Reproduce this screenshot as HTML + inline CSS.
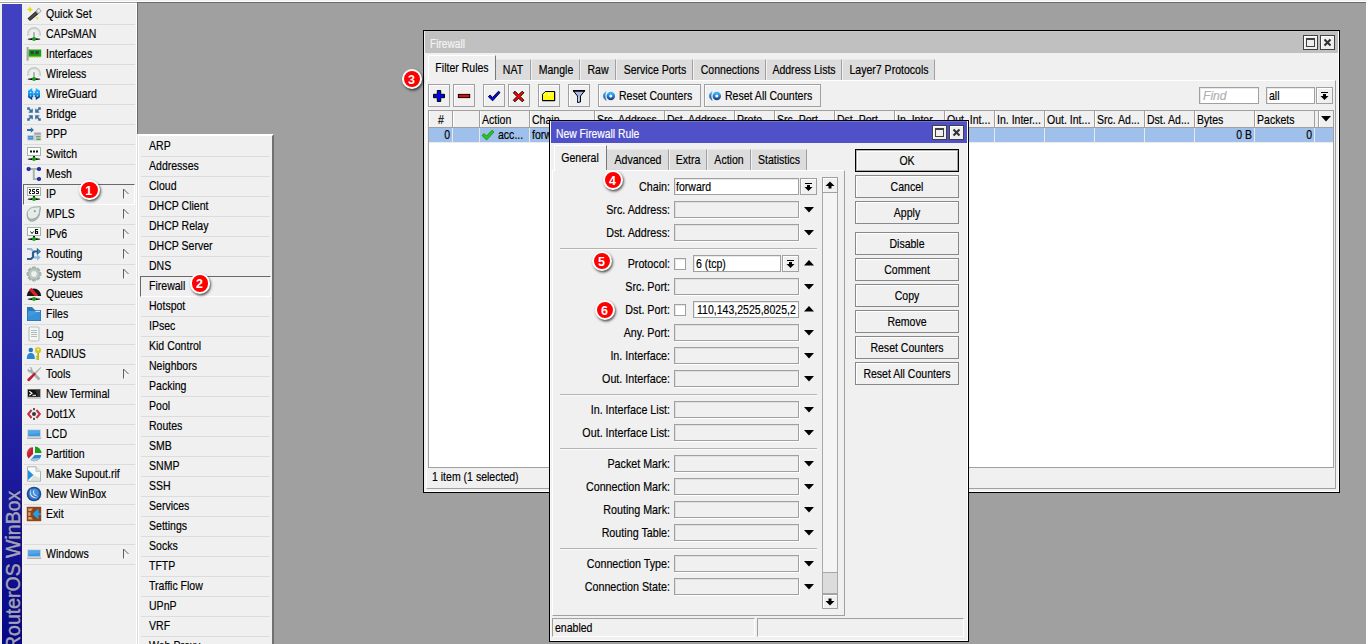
<!DOCTYPE html>
<html><head><meta charset="utf-8"><title>WinBox</title>
<style>
html,body{margin:0;padding:0;}
body{width:1366px;height:644px;overflow:hidden;background:#a0a0a0;position:relative;
 font-family:"Liberation Sans",sans-serif;font-size:13px;letter-spacing:0;color:#000;}
.b{position:absolute;box-sizing:border-box;}
.t{position:absolute;white-space:nowrap;line-height:15px;height:15px;transform:scaleX(.81);transform-origin:0 50%;-webkit-text-stroke:0.18px currentColor;}
.t.r{text-align:right;transform-origin:100% 50%;}
.t.c{text-align:center;transform-origin:50% 50%;}
.t.w{transform:scaleX(.825);}
.t.ww{transform:scaleX(.86);}
svg{position:absolute;overflow:visible;}
.sep{position:absolute;height:1px;background:#dcdcdc;}
.mi{position:absolute;left:46px;line-height:20px;height:20px;white-space:nowrap;}
.smi{position:absolute;left:149px;line-height:20px;height:20px;white-space:nowrap;}
.inp{position:absolute;box-sizing:border-box;border:1px solid #a0a0a0;background:#fff;box-shadow:inset 1px 1px 0 #e8e8e8;}
.inp.d{background:#f0f0f0;box-shadow:inset 1px 1px 0 #e0e0e0, 1px 1px 0 #fff;}
.btn{position:absolute;box-sizing:border-box;border:1px solid #888;background:#f0f0f0;box-shadow:inset 1px 1px 0 #fff;text-align:center;white-space:nowrap;}
.tab{position:absolute;box-sizing:border-box;background:#dcdcdc;border-right:1px solid #a0a0a0;border-top:1px solid #e6e6e6;white-space:nowrap;}
.tab.a{background:#f0f0f0;border-top:1px solid #fff;border-left:1px solid #fff;border-right:1px solid #787878;}
.tb{position:absolute;box-sizing:border-box;border:1px solid #a0a0a0;background:#f0f0f0;box-shadow:inset 1px 1px 0 #fff;}
.wb{position:absolute;box-sizing:border-box;width:15px;height:15px;border:1px solid #404040;background:#f0eeee;box-shadow:inset 1px 1px 0 #fff;}
.hs{position:absolute;width:1px;background:#a0a0a0;}
.badge{position:absolute;width:16.6px;height:16.6px;border-radius:50%;background:#ff0000;border:2.4px solid #fff;box-shadow:1px 1.5px 2.5px rgba(0,0,0,.65);color:#fff;font-weight:bold;font-size:12.5px;line-height:18.4px;text-align:center;letter-spacing:0;text-indent:-1.2px;overflow:hidden;}
</style></head>
<body>
<div class="b " style="left:0px;top:0px;width:1366px;height:1px;background:#f0f0f0"></div>
<div class="b " style="left:0px;top:1px;width:1366px;height:1px;background:#fff"></div>
<div class="b " style="left:0px;top:2px;width:137px;height:1px;background:#a0a0a0"></div>
<div class="b " style="left:137px;top:2px;width:1229px;height:1px;background:#696969"></div>
<div class="b " style="left:0px;top:3px;width:136px;height:641px;background:#f0f0f0"></div>
<div class="b " style="left:0px;top:3px;width:136px;height:1px;background:#fff"></div>
<div class="b " style="left:136px;top:3px;width:1px;height:641px;background:#fff"></div>
<div class="b " style="left:137px;top:3px;width:1px;height:641px;background:#696969"></div>
<div class="b " style="left:2px;top:4px;width:20px;height:640px;background:linear-gradient(#4040c0 0px,#4040c0 150px,#070787 640px)"></div>
<div style="position:absolute;left:2px;top:4px;width:20px;height:640px;overflow:hidden"><div id="vt" style="position:absolute;left:0;top:0;white-space:nowrap;font-size:19.5px;letter-spacing:0;color:#a2a2be;-webkit-text-stroke:0.45px #a2a2be;line-height:20px;transform-origin:0 0;transform:translate(0.5px,646px) rotate(-90deg);text-shadow:1px 1px 1px rgba(0,0,40,.5)">RouterOS WinBox</div></div>
<div class="t " style="left:46px;top:6px;">Quick Set</div>
<div class="sep" style="left:24px;top:24px;width:111px"></div>
<div class="t " style="left:46px;top:26px;">CAPsMAN</div>
<div class="sep" style="left:24px;top:44px;width:111px"></div>
<div class="t " style="left:46px;top:46px;">Interfaces</div>
<div class="sep" style="left:24px;top:64px;width:111px"></div>
<div class="t " style="left:46px;top:66px;">Wireless</div>
<div class="sep" style="left:24px;top:84px;width:111px"></div>
<div class="t " style="left:46px;top:86px;">WireGuard</div>
<div class="sep" style="left:24px;top:104px;width:111px"></div>
<div class="t " style="left:46px;top:106px;">Bridge</div>
<div class="sep" style="left:24px;top:124px;width:111px"></div>
<div class="t " style="left:46px;top:126px;">PPP</div>
<div class="sep" style="left:24px;top:144px;width:111px"></div>
<div class="t " style="left:46px;top:146px;">Switch</div>
<div class="sep" style="left:24px;top:164px;width:111px"></div>
<div class="t " style="left:46px;top:166px;">Mesh</div>
<div class="b " style="left:23px;top:184px;width:112px;height:21px;border-top:1px solid #696969;border-left:1px solid #696969;border-bottom:1px solid #fff;border-right:1px solid #fff;"></div>
<div class="t " style="left:46px;top:186px;">IP</div>
<svg style="left:122px;top:188px" width="8" height="12" viewBox="0 0 8 12"><path d="M1.5 1 L1.5 11" stroke="#606060" stroke-width="1" fill="none"/><path d="M1.5 1 L6.5 6" stroke="#606060" stroke-width="1" fill="none"/><path d="M6.5 6 L1.5 11" stroke="#fff" stroke-width="1" fill="none"/></svg>
<div class="t " style="left:46px;top:206px;">MPLS</div>
<svg style="left:122px;top:208px" width="8" height="12" viewBox="0 0 8 12"><path d="M1.5 1 L1.5 11" stroke="#606060" stroke-width="1" fill="none"/><path d="M1.5 1 L6.5 6" stroke="#606060" stroke-width="1" fill="none"/><path d="M6.5 6 L1.5 11" stroke="#fff" stroke-width="1" fill="none"/></svg>
<div class="sep" style="left:24px;top:224px;width:111px"></div>
<div class="t " style="left:46px;top:226px;">IPv6</div>
<svg style="left:122px;top:228px" width="8" height="12" viewBox="0 0 8 12"><path d="M1.5 1 L1.5 11" stroke="#606060" stroke-width="1" fill="none"/><path d="M1.5 1 L6.5 6" stroke="#606060" stroke-width="1" fill="none"/><path d="M6.5 6 L1.5 11" stroke="#fff" stroke-width="1" fill="none"/></svg>
<div class="sep" style="left:24px;top:244px;width:111px"></div>
<div class="t " style="left:46px;top:246px;">Routing</div>
<svg style="left:122px;top:248px" width="8" height="12" viewBox="0 0 8 12"><path d="M1.5 1 L1.5 11" stroke="#606060" stroke-width="1" fill="none"/><path d="M1.5 1 L6.5 6" stroke="#606060" stroke-width="1" fill="none"/><path d="M6.5 6 L1.5 11" stroke="#fff" stroke-width="1" fill="none"/></svg>
<div class="sep" style="left:24px;top:264px;width:111px"></div>
<div class="t " style="left:46px;top:266px;">System</div>
<svg style="left:122px;top:268px" width="8" height="12" viewBox="0 0 8 12"><path d="M1.5 1 L1.5 11" stroke="#606060" stroke-width="1" fill="none"/><path d="M1.5 1 L6.5 6" stroke="#606060" stroke-width="1" fill="none"/><path d="M6.5 6 L1.5 11" stroke="#fff" stroke-width="1" fill="none"/></svg>
<div class="sep" style="left:24px;top:284px;width:111px"></div>
<div class="t " style="left:46px;top:286px;">Queues</div>
<div class="sep" style="left:24px;top:304px;width:111px"></div>
<div class="t " style="left:46px;top:306px;">Files</div>
<div class="sep" style="left:24px;top:324px;width:111px"></div>
<div class="t " style="left:46px;top:326px;">Log</div>
<div class="sep" style="left:24px;top:344px;width:111px"></div>
<div class="t " style="left:46px;top:346px;">RADIUS</div>
<div class="sep" style="left:24px;top:364px;width:111px"></div>
<div class="t " style="left:46px;top:366px;">Tools</div>
<svg style="left:122px;top:368px" width="8" height="12" viewBox="0 0 8 12"><path d="M1.5 1 L1.5 11" stroke="#606060" stroke-width="1" fill="none"/><path d="M1.5 1 L6.5 6" stroke="#606060" stroke-width="1" fill="none"/><path d="M6.5 6 L1.5 11" stroke="#fff" stroke-width="1" fill="none"/></svg>
<div class="sep" style="left:24px;top:384px;width:111px"></div>
<div class="t " style="left:46px;top:386px;">New Terminal</div>
<div class="sep" style="left:24px;top:404px;width:111px"></div>
<div class="t " style="left:46px;top:406px;">Dot1X</div>
<div class="sep" style="left:24px;top:424px;width:111px"></div>
<div class="t " style="left:46px;top:426px;">LCD</div>
<div class="sep" style="left:24px;top:444px;width:111px"></div>
<div class="t " style="left:46px;top:446px;">Partition</div>
<div class="sep" style="left:24px;top:464px;width:111px"></div>
<div class="t " style="left:46px;top:466px;">Make Supout.rif</div>
<div class="sep" style="left:24px;top:484px;width:111px"></div>
<div class="t " style="left:46px;top:486px;">New WinBox</div>
<div class="sep" style="left:24px;top:504px;width:111px"></div>
<div class="t " style="left:46px;top:506px;">Exit</div>
<div class="sep" style="left:24px;top:524px;width:111px"></div>
<div class="sep" style="left:24px;top:544px;width:111px"></div>
<div class="t " style="left:46px;top:546px;">Windows</div>
<svg style="left:122px;top:548px" width="8" height="12" viewBox="0 0 8 12"><path d="M1.5 1 L1.5 11" stroke="#606060" stroke-width="1" fill="none"/><path d="M1.5 1 L6.5 6" stroke="#606060" stroke-width="1" fill="none"/><path d="M6.5 6 L1.5 11" stroke="#fff" stroke-width="1" fill="none"/></svg>
<div class="sep" style="left:24px;top:564px;width:111px"></div>
<svg style="left:26px;top:6px" width="16" height="16" viewBox="0 0 16 16"><path d="M1.500 12.500 L10.500 4.500 L13 7.500 L4 15z" fill="#282828"/><path d="M2.700 12.700 L10.500 5.800 L11.500 7 L3.800 13.900z" fill="#505050"/><path d="M9.800 5.200 L12.600 2 L15.200 5 L12.200 8z" fill="#d0d0d0" stroke="#909090" stroke-width="0.700"/><rect x="12" y="4" width="1.500" height="1.500" fill="#fff"/><path d="M4 0.500 L5 2.500 L7 3.500 L5 4.500 L4 6.500 L3 4.500 L1 3.500 L3 2.500z" fill="#e0e000"/><rect x="10.2" y="11.2" width="2" height="2" fill="#e0e020"/></svg>
<svg style="left:26px;top:26px" width="16" height="16" viewBox="0 0 16 16"><path d="M2.350 9.800 V8 A5.650 5.650 0 0 1 13.650 8 V9.800" fill="none" stroke="#c0c8c4" stroke-width="2.500"/><path d="M3 9.800 V8 A5 5 0 0 1 13 8 V9.800" fill="none" stroke="#e6eae8" stroke-width="1.200"/><rect x="7.250" y="6.200" width="1.500" height="5.800" fill="#94a49c"/><ellipse cx="8" cy="13.200" rx="6.400" ry="0.900" fill="#101010"/><rect x="5" y="12.600" width="6" height="1.200" fill="#101010"/><circle cx="8" cy="13" r="2" fill="#18a018"/></svg>
<svg style="left:26px;top:46px" width="16" height="16" viewBox="0 0 16 16"><rect x="0.600" y="1" width="2" height="13.600" fill="#9aa8a0"/><rect x="2.6" y="3.5" width="12.6" height="7.2" fill="#18a018"/><rect x="4.6" y="5" width="3.2" height="3.2" fill="#403848"/><rect x="9.4" y="5" width="3.2" height="3.2" fill="#403848"/><path d="M3 10.7h1.5v1H3zM5.5 10.7H7v1H5.5zM8 10.7h1.5v1H8zM10.5 10.7H12v1h-1.5zM13 10.7h1.5v1H13z" fill="#c8d820"/></svg>
<svg style="left:26px;top:66px" width="16" height="16" viewBox="0 0 16 16"><path d="M2.350 9.800 V8 A5.650 5.650 0 0 1 13.650 8 V9.800" fill="none" stroke="#c0c8c4" stroke-width="2.500"/><path d="M3 9.800 V8 A5 5 0 0 1 13 8 V9.800" fill="none" stroke="#e6eae8" stroke-width="1.200"/><rect x="7.250" y="6.200" width="1.500" height="5.800" fill="#94a49c"/><ellipse cx="8" cy="13.200" rx="6.400" ry="0.900" fill="#101010"/><rect x="5" y="12.600" width="6" height="1.200" fill="#101010"/><circle cx="8" cy="13" r="2" fill="#18a018"/></svg>
<svg style="left:26px;top:86px" width="16" height="16" viewBox="0 0 16 16"><defs><linearGradient id="wg" x1="0" y1="0" x2="0" y2="1"><stop offset="0" stop-color="#28b8ff"/><stop offset="0.500" stop-color="#189cf0"/><stop offset="1" stop-color="#001468"/></linearGradient></defs><path d="M6.200 1.900 L2 4.700 V11.300 L6.200 14.100 V11.200 H7.300 V4.800 H6.200z M9.800 1.900 L14 4.700 V11.300 L9.800 14.100 V11.200 H8.700 V4.800 H9.800z M7 7.100h2v1.900h-2z" fill="url(#wg)"/><rect x="4.100" y="6" width="1.100" height="1.100" fill="#f0f8ff"/><rect x="4.100" y="9.300" width="1.100" height="1.100" fill="#f0f8ff"/><rect x="10.800" y="6" width="1.100" height="1.100" fill="#f0f8ff"/><rect x="10.800" y="9.300" width="1.100" height="1.100" fill="#f0f8ff"/></svg>
<svg style="left:26px;top:106px" width="16" height="16" viewBox="0 0 16 16"><g fill="#3c6c9c"><path d="M1.200 1.200 H3.800 V2.400 H3.600 L5.500 4.300 V2.700 H6.800 V6.800 H2.700 V5.500 H4.300 L2.400 3.600 V3.800 H1.200z"/><g transform="translate(16 0) scale(-1 1)"><path d="M1.200 1.200 H3.800 V2.400 H3.600 L5.500 4.300 V2.700 H6.800 V6.800 H2.700 V5.500 H4.300 L2.400 3.600 V3.800 H1.200z"/></g><g transform="translate(0 16) scale(1 -1)"><path d="M1.200 1.200 H3.800 V2.400 H3.600 L5.500 4.300 V2.700 H6.800 V6.800 H2.700 V5.500 H4.300 L2.400 3.600 V3.800 H1.200z"/></g><g transform="translate(16 16) scale(-1 -1)"><path d="M1.200 1.200 H3.800 V2.400 H3.600 L5.500 4.300 V2.700 H6.800 V6.800 H2.700 V5.500 H4.300 L2.400 3.600 V3.800 H1.200z"/></g></g></svg>
<svg style="left:26px;top:126px" width="16" height="16" viewBox="0 0 16 16"><path d="M1 3h3.800V1.200L8 4 4.800 6.800V5H1z" fill="#3070a8"/><rect x="1.200" y="9" width="7" height="5.500" fill="#c0ccd4"/><rect x="2.200" y="10" width="5" height="3.500" fill="#3c8cd8"/><rect x="3" y="10.800" width="3.400" height="1.200" fill="#70b0e8"/><rect x="7.800" y="6" width="7.500" height="8.800" fill="#d0d0d0"/><rect x="8.500" y="6.800" width="6.200" height="2" fill="#a8a8a8"/><rect x="10" y="10.300" width="4.500" height="0.900" fill="#707070"/><rect x="10.500" y="12.600" width="4" height="1.200" fill="#18b018"/></svg>
<svg style="left:26px;top:146px" width="16" height="16" viewBox="0 0 16 16"><rect x="1.500" y="1.500" width="13" height="8" fill="#fff" stroke="#a0b4ac" stroke-width="1"/><rect x="4" y="4.500" width="2" height="2" fill="#101010"/><rect x="7" y="4.500" width="2" height="2" fill="#101010"/><rect x="10" y="4.500" width="2" height="2" fill="#101010"/><rect x="7" y="10" width="2" height="2" fill="#181818"/><ellipse cx="8" cy="13.200" rx="6.400" ry="0.900" fill="#101010"/><rect x="5" y="12.600" width="6" height="1.200" fill="#101010"/><circle cx="8" cy="13" r="2" fill="#18a018"/></svg>
<svg style="left:26px;top:166px" width="16" height="16" viewBox="0 0 16 16"><path d="M2.5 3 H13 M7.8 3 V13 H13" fill="none" stroke="#a8b4ac" stroke-width="2"/><circle cx="2.6" cy="3" r="2.1" fill="#1818a0"/><circle cx="13" cy="3" r="2.1" fill="#1818a0"/><circle cx="13" cy="13" r="2.1" fill="#1818a0"/><circle cx="2.6" cy="3" r="0.8" fill="#4848d0"/><circle cx="13" cy="3" r="0.8" fill="#4848d0"/><circle cx="13" cy="13" r="0.8" fill="#4848d0"/></svg>
<svg style="left:26px;top:186px" width="16" height="16" viewBox="0 0 16 16"><rect x="1.500" y="1.500" width="13" height="8" fill="#fff" stroke="#a0b4ac" stroke-width="1"/><path transform="translate(3 3)" d="M0.500 0.500 H1.500 V2.500 H0.500 V4.500 H1.500" fill="none" stroke="#101010" stroke-width="1" stroke-linecap="square" stroke-linejoin="miter"/><path transform="translate(6 3)" d="M2.500 0.500 H0.500 V2.500 H2.500 V4.500 H0.500" fill="none" stroke="#101010" stroke-width="1" stroke-linecap="square" stroke-linejoin="miter"/><path transform="translate(10 3)" d="M2.500 0.500 H0.500 V2.500 H2.500 V4.500 H0.500" fill="none" stroke="#101010" stroke-width="1" stroke-linecap="square" stroke-linejoin="miter"/><rect x="7" y="10" width="2" height="2" fill="#181818"/><ellipse cx="8" cy="13.200" rx="6.400" ry="0.900" fill="#101010"/><rect x="5" y="12.600" width="6" height="1.200" fill="#101010"/><circle cx="8" cy="13" r="2" fill="#18a018"/></svg>
<svg style="left:26px;top:206px" width="16" height="16" viewBox="0 0 16 16"><path d="M1.200 9.500 C1.200 5.500 4 2.800 8 2.300 L14.300 1.800 L13.500 8.500 C12.500 12.500 9 15.300 5.500 15.300 C2.800 15.300 1.200 12.500 1.200 9.500z" fill="#a8b8b0" stroke="#98a8a0" stroke-width="0.800"/><path d="M1.200 8 C1.200 4.300 4 1.600 8 1.100 L14.300 0.700 L13.500 6.500 C12.500 10.500 9 13.200 5.500 13.200 C2.800 13.200 1.200 11 1.200 8z" fill="#e6ecea" stroke="#98a8a0" stroke-width="1"/><circle cx="8.800" cy="5.200" r="1.100" fill="#98a49e"/></svg>
<svg style="left:26px;top:226px" width="16" height="16" viewBox="0 0 16 16"><rect x="1.500" y="1.500" width="13" height="8" fill="#fff" stroke="#a0b4ac" stroke-width="1"/><path d="M4.500 5.500 L6 7.500 L7.500 5.500" fill="none" stroke="#101010" stroke-width="1"/><path transform="translate(9 3)" d="M2.500 0.500 H0.500 V4.500 H2.500 V2.500 H0.500" fill="none" stroke="#101010" stroke-width="1.2" stroke-linecap="square" stroke-linejoin="miter"/><rect x="7" y="10" width="2" height="2" fill="#181818"/><ellipse cx="8" cy="13.200" rx="6.400" ry="0.900" fill="#101010"/><rect x="5" y="12.600" width="6" height="1.200" fill="#101010"/><circle cx="8" cy="13" r="2" fill="#18a018"/></svg>
<svg style="left:26px;top:246px" width="16" height="16" viewBox="0 0 16 16"><path d="M1 3 H5 L7.500 5.500" fill="none" stroke="#90b8e0" stroke-width="2"/><path d="M8 11.500 H11.500" fill="none" stroke="#90b8e0" stroke-width="2.200"/><path d="M11 8.300 L14.700 11.500 L11 14.700z" fill="#90b8e0"/><path d="M1 13 H5 L7 11 V6.800 L8.500 5.500 H11.500" fill="none" stroke="#2c5c90" stroke-width="2.200"/><path d="M10.800 1.800 L15 5.500 L10.800 9.200z" fill="#2c5c90"/><rect x="12" y="4.500" width="1.200" height="2" fill="#20b0f8"/></svg>
<svg style="left:26px;top:266px" width="16" height="16" viewBox="0 0 16 16"><g fill="#a6b6ae"><circle cx="8" cy="8" r="5.900"/><rect x="5.900" y="0.600" width="4.200" height="14.800" rx="0.800"/><rect x="0.600" y="5.900" width="14.800" height="4.200" rx="0.800"/><rect x="5.900" y="0.600" width="4.200" height="14.800" rx="0.800" transform="rotate(45 8 8)"/><rect x="5.900" y="0.600" width="4.200" height="14.800" rx="0.800" transform="rotate(-45 8 8)"/></g><circle cx="8" cy="8" r="4.500" fill="#d8e0dc"/><circle cx="8" cy="8" r="3.700" fill="#a6b6ae"/><circle cx="8" cy="8" r="2.900" fill="#f0f0f0"/></svg>
<svg style="left:26px;top:286px" width="16" height="16" viewBox="0 0 16 16"><path d="M0.800 10 A7.200 7.500 0 0 1 15.200 10 z" fill="#181818"/><path d="M2.800 4 L5.400 1.800 L12 9 L11.500 10 L8.800 10z" fill="#e02030"/><ellipse cx="8" cy="13.200" rx="6.400" ry="0.900" fill="#101010"/><rect x="5" y="12.600" width="6" height="1.200" fill="#101010"/><circle cx="8" cy="13" r="2.100" fill="#18a018"/></svg>
<svg style="left:26px;top:306px" width="16" height="16" viewBox="0 0 16 16"><path d="M1 1 H6 L9 4 H15 V15 H1z" fill="#2878b8"/><path d="M2 5 H14.200 V14.200 H2z" fill="#3890d8"/><path d="M2 5h12.200L2 11z" fill="#48a0e0" opacity=".7"/><rect x="9.500" y="4.800" width="4.500" height="1" fill="#e8f0f8"/></svg>
<svg style="left:26px;top:326px" width="16" height="16" viewBox="0 0 16 16"><path d="M3 1.500 h1l1 -1 1 1 1 -1 1 1 1 -1 1 1 1 -1 1 1h1 V14.500 h-1l-1 1 -1 -1 -1 1 -1 -1 -1 1 -1 -1 -1 1 -1 -1h-1z" fill="#f4f6f5" stroke="#b0bcb6" stroke-width="1"/><path d="M5 4.500h6M5 6.500h6M5 8.500h6M5 10.500h6" stroke="#b0bcb6" stroke-width="1"/></svg>
<svg style="left:26px;top:346px" width="16" height="16" viewBox="0 0 16 16"><circle cx="4.800" cy="4" r="2.300" fill="#2878c0"/><path d="M0.800 13 C0.800 8.500 2.500 7 4.800 7 C7.200 7 8.800 8.500 8.800 13z" fill="#2888d8"/><circle cx="12" cy="4.300" r="3" fill="#d0c818"/><circle cx="12" cy="3.600" r="1.100" fill="#f4f0b0"/><path d="M11.200 7 h1.800 v7 h-1.800z M9.800 10 h1.600v1.300H9.800z M9.800 12.300h1.600v1.300H9.800z" fill="#c0b810"/></svg>
<svg style="left:26px;top:366px" width="16" height="16" viewBox="0 0 16 16"><path d="M2 2.500 C1 4.500 2 6.500 4.500 6.500 L12.500 14.500 L14.500 12.500 L6.500 4.500 C6.800 2.500 5.500 0.800 3.500 1 L5 3 L4 4.500 L2 2.500z" fill="#a4b0aa"/><path d="M14.500 1 L15.300 1.800 L10 8 L8.500 6.500z" fill="#b0bcb6"/><path d="M8.500 6.500 L10 8 L3.500 15 C2.500 16 0.500 14.200 1.500 13z" fill="#c01830"/></svg>
<svg style="left:26px;top:386px" width="16" height="16" viewBox="0 0 16 16"><rect x="1.300" y="3" width="13.400" height="8.400" fill="#909090"/><rect x="2" y="3.700" width="12" height="7" fill="#101010"/><path d="M9 3.700h5v7h-2z" fill="#404040" opacity=".7"/><path d="M3.300 5.200 L6 7.200 L3.300 9.200" fill="none" stroke="#fff" stroke-width="1.100"/><rect x="6.500" y="8.800" width="3.500" height="1" fill="#fff"/><rect x="1" y="11.600" width="14" height="1" fill="#b8b8b8"/></svg>
<svg style="left:26px;top:406px" width="16" height="16" viewBox="0 0 16 16"><path d="M5.600 4 L2.200 8 L5.600 12 M10.400 4 L13.800 8 L10.400 12" fill="none" stroke="#c83048" stroke-width="2"/><circle cx="8" cy="8" r="2" fill="#383838"/><rect x="7.300" y="2" width="1.400" height="2.200" fill="#181818"/><rect x="7.300" y="11.800" width="1.400" height="2.200" fill="#181818"/></svg>
<svg style="left:26px;top:426px" width="16" height="16" viewBox="0 0 16 16"><rect x="1.300" y="3.500" width="13.600" height="7.600" fill="#c4ccd4"/><rect x="2.200" y="4.400" width="11.800" height="5.800" fill="#3c98e0"/><path d="M2.200 4.400h11.800v2.500L2.200 8.500z" fill="#60b0f0" opacity=".6"/><rect x="1" y="11.700" width="14.200" height="1" fill="#989898"/></svg>
<svg style="left:26px;top:446px" width="16" height="16" viewBox="0 0 16 16"><path d="M7 1.200 A7 7 0 0 0 2.500 12.500 L7 8z" fill="#c02030"/><path d="M6.200 0.800 A6 6.500 0 0 0 1.200 10 L4 6z" fill="#d84050" opacity=".5"/><path d="M9 0.500 A7 7 0 0 1 15.500 7 L9 7z" fill="#18a018"/><path d="M15.300 9 A7 7 0 0 1 4.500 14 L8.800 9z" fill="#2888d8"/><path d="M14 12 A7 7 0 0 1 4.500 14 l2 -1.500z" fill="#b0c4d8"/></svg>
<svg style="left:26px;top:466px" width="16" height="16" viewBox="0 0 16 16"><path d="M1.500 0.800 H10 L14.500 5.300 V15.200 H1.500z" fill="#f8faf9" stroke="#a8b4ae" stroke-width="1"/><path d="M10 0.800 V5.300 H14.500" fill="#e0e6e3" stroke="#a8b4ae" stroke-width="0.800"/><path d="M2 4 L7.500 9 L2 14z" fill="#2090e0"/><path d="M7.500 9 L14 12 V14.700 H4z" fill="#d0d8d4" opacity=".7"/></svg>
<svg style="left:26px;top:486px" width="16" height="16" viewBox="0 0 16 16"><circle cx="8" cy="8" r="7.300" fill="#1c4c90"/><circle cx="8" cy="8" r="5.700" fill="#3478c8"/><circle cx="8.500" cy="6.500" r="3.800" fill="#5098e0" opacity=".7"/><path d="M5.500 2.500 C3 6 5 11.500 11.500 12 C8 13 3.800 10.500 3.800 6.500 C3.800 4.800 4.500 3.500 5.500 2.500z" fill="#fff"/><path d="M8.500 3.500 C7 6.500 9 10 13 10.300 C10 11 7 9 7 6 C7 5 7.600 4.200 8.500 3.500z" fill="#e0ecf8"/></svg>
<svg style="left:26px;top:506px" width="16" height="16" viewBox="0 0 16 16"><rect x="0.800" y="0.800" width="14.400" height="14.400" fill="#8c4418"/><path d="M2.200 2.500 H7 L5 5 H2.200z M2.200 6.200 H4.500 V9.800 H2.200z M2.200 11 H5 L7 13.500 H2.200z" fill="#e0a070"/><path d="M12.500 2.500 V13.500 L6.500 8z" fill="#20a0f0"/><rect x="12" y="7.200" width="3" height="1.600" fill="#20a0f0"/></svg>
<svg style="left:26px;top:546px" width="16" height="16" viewBox="0 0 16 16"><rect x="1.300" y="3.500" width="13.600" height="7.600" fill="#c4ccd4"/><rect x="2.200" y="4.400" width="11.800" height="5.800" fill="#3c98e0"/><path d="M2.200 4.400h11.800v2.500L2.200 8.500z" fill="#60b0f0" opacity=".6"/><rect x="1" y="11.700" width="14.200" height="1" fill="#989898"/></svg>
<div class="b " style="left:137px;top:134px;width:137px;height:520px;background:#f0f0f0;border-top:2px solid #fff;border-left:1px solid #dcdcdc;border-right:2px solid #707070;box-shadow:inset 1px 0 0 #fff;"></div>
<div class="t " style="left:149px;top:138px;">ARP</div>
<div class="sep" style="left:141px;top:156px;width:129px"></div>
<div class="t " style="left:149px;top:158px;">Addresses</div>
<div class="sep" style="left:141px;top:176px;width:129px"></div>
<div class="t " style="left:149px;top:178px;">Cloud</div>
<div class="sep" style="left:141px;top:196px;width:129px"></div>
<div class="t " style="left:149px;top:198px;">DHCP Client</div>
<div class="sep" style="left:141px;top:216px;width:129px"></div>
<div class="t " style="left:149px;top:218px;">DHCP Relay</div>
<div class="sep" style="left:141px;top:236px;width:129px"></div>
<div class="t " style="left:149px;top:238px;">DHCP Server</div>
<div class="sep" style="left:141px;top:256px;width:129px"></div>
<div class="t " style="left:149px;top:258px;">DNS</div>
<div class="b " style="left:140px;top:276px;width:131px;height:21px;border-top:1px solid #696969;border-left:1px solid #696969;border-bottom:1px solid #fff;border-right:1px solid #fff;"></div>
<div class="t " style="left:149px;top:278px;">Firewall</div>
<div class="t " style="left:149px;top:298px;">Hotspot</div>
<div class="sep" style="left:141px;top:316px;width:129px"></div>
<div class="t " style="left:149px;top:318px;">IPsec</div>
<div class="sep" style="left:141px;top:336px;width:129px"></div>
<div class="t " style="left:149px;top:338px;">Kid Control</div>
<div class="sep" style="left:141px;top:356px;width:129px"></div>
<div class="t " style="left:149px;top:358px;">Neighbors</div>
<div class="sep" style="left:141px;top:376px;width:129px"></div>
<div class="t " style="left:149px;top:378px;">Packing</div>
<div class="sep" style="left:141px;top:396px;width:129px"></div>
<div class="t " style="left:149px;top:398px;">Pool</div>
<div class="sep" style="left:141px;top:416px;width:129px"></div>
<div class="t " style="left:149px;top:418px;">Routes</div>
<div class="sep" style="left:141px;top:436px;width:129px"></div>
<div class="t " style="left:149px;top:438px;">SMB</div>
<div class="sep" style="left:141px;top:456px;width:129px"></div>
<div class="t " style="left:149px;top:458px;">SNMP</div>
<div class="sep" style="left:141px;top:476px;width:129px"></div>
<div class="t " style="left:149px;top:478px;">SSH</div>
<div class="sep" style="left:141px;top:496px;width:129px"></div>
<div class="t " style="left:149px;top:498px;">Services</div>
<div class="sep" style="left:141px;top:516px;width:129px"></div>
<div class="t " style="left:149px;top:518px;">Settings</div>
<div class="sep" style="left:141px;top:536px;width:129px"></div>
<div class="t " style="left:149px;top:538px;">Socks</div>
<div class="sep" style="left:141px;top:556px;width:129px"></div>
<div class="t " style="left:149px;top:558px;">TFTP</div>
<div class="sep" style="left:141px;top:576px;width:129px"></div>
<div class="t " style="left:149px;top:578px;">Traffic Flow</div>
<div class="sep" style="left:141px;top:596px;width:129px"></div>
<div class="t " style="left:149px;top:598px;">UPnP</div>
<div class="sep" style="left:141px;top:616px;width:129px"></div>
<div class="t " style="left:149px;top:618px;">VRF</div>
<div class="sep" style="left:141px;top:636px;width:129px"></div>
<div class="t " style="left:149px;top:638px;">Web Proxy</div>
<div class="sep" style="left:141px;top:656px;width:129px"></div>
<div class="b " style="left:423px;top:30px;width:917px;height:463px;background:#f0f0f0;border:1px solid #000;box-shadow:inset 1px 1px 0 #f0f0f0, inset -1px -1px 0 #fff;"></div>
<div class="b " style="left:425px;top:31px;width:913px;height:22px;background:#c0c0c0;border-top:1px solid #c8c8c8"></div>
<div class="t " style="left:429.5px;top:36px;color:#f4f4f4;transform:scaleX(.78)">Firewall</div>
<div class="wb" style="left:1303px;top:35px"><svg style="left:0;top:0" width="13" height="13" viewBox="0 0 13 13"><rect x="2.5" y="3" width="8" height="7.5" fill="none" stroke="#404040" stroke-width="1"/><rect x="2" y="2" width="9" height="2" fill="#404040"/></svg></div><div class="wb" style="left:1320px;top:35px"><svg style="left:0;top:0" width="13" height="13" viewBox="0 0 13 13"><path d="M3.5 3.5 L9.5 9.5 M9.5 3.5 L3.5 9.5" stroke="#303030" stroke-width="2" fill="none"/></svg></div>
<div class="b " style="left:426px;top:80px;width:910px;height:409px;border-top:1px solid #fff;border-left:1px solid #fff;border-right:1px solid #a0a0a0;border-bottom:1px solid #a0a0a0;"></div>
<div class="tab a" style="left:428px;top:55px;width:68px;height:25px"></div>
<div class="b " style="left:429px;top:80px;width:66px;height:1px;background:#f0f0f0"></div>
<div class="t c " style="left:311.5px;width:300px;top:59.5px;">Filter Rules</div>
<div class="tab" style="left:496px;top:59px;width:35px;height:21px"></div>
<div class="t c " style="left:363px;width:300px;top:61.5px;">NAT</div>
<div class="tab" style="left:532px;top:59px;width:48px;height:21px"></div>
<div class="t c " style="left:405.5px;width:300px;top:61.5px;">Mangle</div>
<div class="tab" style="left:581px;top:59px;width:35px;height:21px"></div>
<div class="t c " style="left:448px;width:300px;top:61.5px;">Raw</div>
<div class="tab" style="left:617px;top:59px;width:76px;height:21px"></div>
<div class="t c " style="left:504.5px;width:300px;top:61.5px;">Service Ports</div>
<div class="tab" style="left:694px;top:59px;width:72px;height:21px"></div>
<div class="t c " style="left:579.5px;width:300px;top:61.5px;">Connections</div>
<div class="tab" style="left:767px;top:59px;width:75px;height:21px"></div>
<div class="t c " style="left:654px;width:300px;top:61.5px;">Address Lists</div>
<div class="tab" style="left:843px;top:59px;width:92px;height:21px"></div>
<div class="t c " style="left:738.5px;width:300px;top:61.5px;">Layer7 Protocols</div>
<div class="tb" style="left:428px;top:84px;width:22px;height:23px"><svg style="left:-1px;top:-1px" width="22" height="23" viewBox="0 0 22 23"><path d="M9.3 6.500h3.400v3.800h3.800v3.400h-3.800v3.800H9.300v-3.800H5.500v-3.400h3.800z" fill="#0000ff" stroke="#000" stroke-width="1" stroke-linejoin="miter"/></svg></div>
<div class="tb" style="left:453px;top:84px;width:22px;height:23px"><svg style="left:-1px;top:-1px" width="22" height="23" viewBox="0 0 22 23"><rect x="5.400" y="10.400" width="11.300" height="3.200" fill="#ff0000" stroke="#000" stroke-width="1"/></svg></div>
<div class="tb" style="left:483px;top:84px;width:22px;height:23px"><svg style="left:-1px;top:-1px" width="22" height="23" viewBox="0 0 22 23"><path d="M5.300 12.700 L7 11 L9.600 13.400 L15.500 7.200 L17 8.600 L9.700 16.800 z" fill="#0000ff" stroke="#000" stroke-width="0.900"/></svg></div>
<div class="tb" style="left:508px;top:84px;width:22px;height:23px"><svg style="left:-1px;top:-1px" width="22" height="23" viewBox="0 0 22 23"><path d="M5.300 8.800 L7 7.200 L10.600 10.800 L14.200 7.200 L15.900 8.800 L12.300 12.500 L15.900 16.200 L14.200 17.800 L10.600 14.200 L7 17.800 L5.300 16.200 L8.900 12.500 z" fill="#ff0000" stroke="#000" stroke-width="0.900"/></svg></div>
<div class="tb" style="left:538px;top:84px;width:22px;height:23px"><svg style="left:-1px;top:-1px" width="22" height="23" viewBox="0 0 22 23"><path d="M4.500 10.300 L7.300 7.500 H16.500 V16.500 H4.500 z" fill="#ffff00" stroke="#000" stroke-width="1"/><path d="M4.300 16.800H16.800V7.500" fill="none" stroke="#000" stroke-width="0.800"/><path d="M9.500 9.700h2.200M12.700 9.700h2.200M10 11.500h1.500M13 11.500h1.500" stroke="#ffffd0" stroke-width="1"/><rect x="6.200" y="9.300" width="1.300" height="1.300" fill="#fffff0"/></svg></div>
<div class="tb" style="left:568px;top:84px;width:22px;height:23px"><svg style="left:-1px;top:-1px" width="22" height="23" viewBox="0 0 22 23"><path d="M5.300 6.800 H16.700 L12.500 12 V18 L9.500 18.500 V12 z" fill="#a8b8e8" stroke="#000" stroke-width="1" stroke-linejoin="round"/><rect x="5" y="6" width="12" height="1.600" fill="#000"/><path d="M10.300 12.500v5" stroke="#e0e8ff" stroke-width="0.800"/></svg></div>
<div class="tb" style="left:598px;top:84px;width:103px;height:23px"><svg style="left:-1px;top:-1px" width="22" height="23" viewBox="0 0 22 23"><defs><linearGradient id="rg" x1="0" y1="0" x2="0" y2="1"><stop offset="0" stop-color="#38b0ff"/><stop offset="1" stop-color="#184890"/></linearGradient></defs><path d="M8 7.600 Q2.600 12 8 16.400 Q6 12 8 7.600z" fill="url(#rg)" stroke="url(#rg)" stroke-width="0.600"/><circle cx="12.800" cy="12" r="2.900" fill="#fff" stroke="url(#rg)" stroke-width="2.700"/></svg></div>
<div class="t " style="left:619px;top:88px;">Reset Counters</div>
<div class="tb" style="left:704px;top:84px;width:117px;height:23px"><svg style="left:-1px;top:-1px" width="22" height="23" viewBox="0 0 22 23"><defs><linearGradient id="rg" x1="0" y1="0" x2="0" y2="1"><stop offset="0" stop-color="#38b0ff"/><stop offset="1" stop-color="#184890"/></linearGradient></defs><path d="M8 7.600 Q2.600 12 8 16.400 Q6 12 8 7.600z" fill="url(#rg)" stroke="url(#rg)" stroke-width="0.600"/><circle cx="12.800" cy="12" r="2.900" fill="#fff" stroke="url(#rg)" stroke-width="2.700"/></svg></div>
<div class="t " style="left:724.5px;top:88px;">Reset All Counters</div>
<div class="inp" style="left:1199px;top:87px;width:60px;height:17px"></div>
<div class="t " style="left:1203px;top:88px;font-style:italic;color:#b0b0b8;transform:scaleX(.93)">Find</div>
<div class="inp" style="left:1266px;top:87px;width:49px;height:17px"></div>
<div class="t " style="left:1269px;top:88px;">all</div>
<div class="tb" style="left:1316px;top:87px;width:17px;height:17px"><svg style="left:-1px;top:-1px" width="17" height="17" viewBox="0 0 17 17"><rect x="5" y="5" width="7" height="1" fill="#000"/><rect x="7" y="7" width="3" height="2.200" fill="#000"/><path d="M4.5 9 h8 l-4 4 z" fill="#000"/></svg></div>
<div class="b " style="left:428px;top:110px;width:906px;height:358px;background:#fff;border:1px solid #a0a0a0;"></div>
<div class="b " style="left:429px;top:111px;width:904px;height:16px;background:#f0f0f0;border-bottom:0px solid #a0a0a0"></div>
<div class="b " style="left:429px;top:127px;width:904px;height:1px;background:#a0a0a0"></div>
<div class="b " style="left:429px;top:128px;width:904px;height:14px;background:#9ec0ea"></div>
<div class="b " style="left:429px;top:142px;width:904px;height:1px;background:#ececec"></div>
<div class="b " style="left:429px;top:111px;width:1px;height:16px;background:#fff"></div>
<div class="b " style="left:452px;top:111px;width:1px;height:16px;background:#a0a0a0"></div>
<div class="b " style="left:452px;top:128px;width:1px;height:15px;background:#e8e8e8"></div>
<div class="t c " style="left:290.5px;width:300px;top:112px;">#</div>
<div class="b " style="left:453px;top:111px;width:1px;height:16px;background:#fff"></div>
<div class="b " style="left:479px;top:111px;width:1px;height:16px;background:#a0a0a0"></div>
<div class="b " style="left:479px;top:128px;width:1px;height:15px;background:#e8e8e8"></div>
<div class="b " style="left:480px;top:111px;width:1px;height:16px;background:#fff"></div>
<div class="b " style="left:529px;top:111px;width:1px;height:16px;background:#a0a0a0"></div>
<div class="b " style="left:529px;top:128px;width:1px;height:15px;background:#e8e8e8"></div>
<div class="t " style="left:481.5px;top:112px;">Action</div>
<div class="b " style="left:530px;top:111px;width:1px;height:16px;background:#fff"></div>
<div class="b " style="left:594px;top:111px;width:1px;height:16px;background:#a0a0a0"></div>
<div class="b " style="left:594px;top:128px;width:1px;height:15px;background:#e8e8e8"></div>
<div class="t " style="left:531.5px;top:112px;">Chain</div>
<div class="b " style="left:595px;top:111px;width:1px;height:16px;background:#fff"></div>
<div class="b " style="left:664px;top:111px;width:1px;height:16px;background:#a0a0a0"></div>
<div class="b " style="left:664px;top:128px;width:1px;height:15px;background:#e8e8e8"></div>
<div class="t " style="left:596.5px;top:112px;">Src. Address</div>
<div class="b " style="left:665px;top:111px;width:1px;height:16px;background:#fff"></div>
<div class="b " style="left:734px;top:111px;width:1px;height:16px;background:#a0a0a0"></div>
<div class="b " style="left:734px;top:128px;width:1px;height:15px;background:#e8e8e8"></div>
<div class="t " style="left:666.5px;top:112px;">Dst. Address</div>
<div class="b " style="left:735px;top:111px;width:1px;height:16px;background:#fff"></div>
<div class="b " style="left:774px;top:111px;width:1px;height:16px;background:#a0a0a0"></div>
<div class="b " style="left:774px;top:128px;width:1px;height:15px;background:#e8e8e8"></div>
<div class="t " style="left:736.5px;top:112px;">Proto...</div>
<div class="b " style="left:775px;top:111px;width:1px;height:16px;background:#fff"></div>
<div class="b " style="left:834px;top:111px;width:1px;height:16px;background:#a0a0a0"></div>
<div class="b " style="left:834px;top:128px;width:1px;height:15px;background:#e8e8e8"></div>
<div class="t " style="left:776.5px;top:112px;">Src. Port</div>
<div class="b " style="left:835px;top:111px;width:1px;height:16px;background:#fff"></div>
<div class="b " style="left:894px;top:111px;width:1px;height:16px;background:#a0a0a0"></div>
<div class="b " style="left:894px;top:128px;width:1px;height:15px;background:#e8e8e8"></div>
<div class="t " style="left:836.5px;top:112px;">Dst. Port</div>
<div class="b " style="left:895px;top:111px;width:1px;height:16px;background:#fff"></div>
<div class="b " style="left:944px;top:111px;width:1px;height:16px;background:#a0a0a0"></div>
<div class="b " style="left:944px;top:128px;width:1px;height:15px;background:#e8e8e8"></div>
<div class="t " style="left:896.5px;top:112px;">In. Inter...</div>
<div class="b " style="left:945px;top:111px;width:1px;height:16px;background:#fff"></div>
<div class="b " style="left:994px;top:111px;width:1px;height:16px;background:#a0a0a0"></div>
<div class="b " style="left:994px;top:128px;width:1px;height:15px;background:#e8e8e8"></div>
<div class="t " style="left:946.5px;top:112px;">Out. Int...</div>
<div class="b " style="left:995px;top:111px;width:1px;height:16px;background:#fff"></div>
<div class="b " style="left:1044px;top:111px;width:1px;height:16px;background:#a0a0a0"></div>
<div class="b " style="left:1044px;top:128px;width:1px;height:15px;background:#e8e8e8"></div>
<div class="t " style="left:996.5px;top:112px;">In. Inter...</div>
<div class="b " style="left:1045px;top:111px;width:1px;height:16px;background:#fff"></div>
<div class="b " style="left:1094px;top:111px;width:1px;height:16px;background:#a0a0a0"></div>
<div class="b " style="left:1094px;top:128px;width:1px;height:15px;background:#e8e8e8"></div>
<div class="t " style="left:1046.5px;top:112px;">Out. Int...</div>
<div class="b " style="left:1095px;top:111px;width:1px;height:16px;background:#fff"></div>
<div class="b " style="left:1144px;top:111px;width:1px;height:16px;background:#a0a0a0"></div>
<div class="b " style="left:1144px;top:128px;width:1px;height:15px;background:#e8e8e8"></div>
<div class="t " style="left:1096.5px;top:112px;">Src. Ad...</div>
<div class="b " style="left:1145px;top:111px;width:1px;height:16px;background:#fff"></div>
<div class="b " style="left:1194px;top:111px;width:1px;height:16px;background:#a0a0a0"></div>
<div class="b " style="left:1194px;top:128px;width:1px;height:15px;background:#e8e8e8"></div>
<div class="t " style="left:1146.5px;top:112px;">Dst. Ad...</div>
<div class="b " style="left:1195px;top:111px;width:1px;height:16px;background:#fff"></div>
<div class="b " style="left:1254px;top:111px;width:1px;height:16px;background:#a0a0a0"></div>
<div class="b " style="left:1254px;top:128px;width:1px;height:15px;background:#e8e8e8"></div>
<div class="t " style="left:1196.5px;top:112px;">Bytes</div>
<div class="b " style="left:1255px;top:111px;width:1px;height:16px;background:#fff"></div>
<div class="b " style="left:1314px;top:111px;width:1px;height:16px;background:#a0a0a0"></div>
<div class="b " style="left:1314px;top:128px;width:1px;height:15px;background:#e8e8e8"></div>
<div class="t " style="left:1256.5px;top:112px;">Packets</div>
<div class="b " style="left:1318px;top:111px;width:1px;height:16px;background:#a0a0a0"></div>
<div class="b " style="left:1319px;top:111px;width:1px;height:16px;background:#fff"></div>
<svg style="left:1321px;top:116px" width="10" height="6" viewBox="0 0 10 6"><path d="M0 0h10l-5 5.5z" fill="#000"/></svg>
<div class="t r " style="left:149.5px;width:300px;top:126.5px;">0</div>
<svg style="left:481px;top:129px" width="14" height="12" viewBox="0 0 14 12"><path d="M1 6.5 L3 4.5 L5.5 7 L11 1.2 L13 3 L5.6 11 z" fill="#20c820" stroke="#108010" stroke-width="0.7"/></svg>
<div class="t " style="left:497.5px;top:126.5px;">acc...</div>
<div class="t " style="left:532px;top:126.5px;">forw</div>
<div class="t r " style="left:951.5px;width:300px;top:126.5px;">0 B</div>
<div class="t r " style="left:1011.5px;width:300px;top:126.5px;">0</div>
<div class="t " style="left:432px;top:469px;">1 item (1 selected)</div>
<div class="b " style="left:549px;top:120px;width:420px;height:522px;background:#f0f0f0;border:1px solid #000;box-shadow:inset 1px 0 0 #f8f8f8, inset -1px -1px 0 #fff;"></div>
<div class="b " style="left:551px;top:121px;width:416px;height:22px;background:#5050c8;border-top:1px solid #7272dc"></div>
<div class="t " style="left:555.5px;top:126px;color:#fff;transform:scaleX(.795)">New Firewall Rule</div>
<div class="wb" style="left:932px;top:125px"><svg style="left:0;top:0" width="13" height="13" viewBox="0 0 13 13"><rect x="2.5" y="3" width="8" height="7.5" fill="none" stroke="#404040" stroke-width="1"/><rect x="2" y="2" width="9" height="2" fill="#404040"/></svg></div><div class="wb" style="left:949px;top:125px"><svg style="left:0;top:0" width="13" height="13" viewBox="0 0 13 13"><path d="M3.5 3.5 L9.5 9.5 M9.5 3.5 L3.5 9.5" stroke="#303030" stroke-width="2" fill="none"/></svg></div>
<div class="b " style="left:552px;top:170px;width:293px;height:446px;border-top:1px solid #fff;border-left:1px solid #fff;border-right:1px solid #a0a0a0;border-bottom:1px solid #a0a0a0;"></div>
<div class="tab a" style="left:554px;top:145px;width:53px;height:25px"></div>
<div class="b " style="left:555px;top:170px;width:51px;height:1px;background:#f0f0f0"></div>
<div class="t c " style="left:430px;width:300px;top:149.5px;">General</div>
<div class="tab" style="left:607px;top:149px;width:62px;height:21px"></div>
<div class="t c " style="left:487.5px;width:300px;top:151.5px;">Advanced</div>
<div class="tab" style="left:670px;top:149px;width:37px;height:21px"></div>
<div class="t c " style="left:538px;width:300px;top:151.5px;">Extra</div>
<div class="tab" style="left:708px;top:149px;width:43px;height:21px"></div>
<div class="t c " style="left:579px;width:300px;top:151.5px;">Action</div>
<div class="tab" style="left:752px;top:149px;width:55px;height:21px"></div>
<div class="t c " style="left:629px;width:300px;top:151.5px;">Statistics</div>
<div class="t r w" style="left:370px;width:300px;top:179px;">Chain:</div>
<div class="inp" style="left:674px;top:178px;width:125px;height:17px"></div>
<div class="t " style="left:676.3px;top:179px;">forward</div>
<div class="tb" style="left:800px;top:178px;width:17px;height:17px"><svg style="left:-1px;top:-1px" width="17" height="17" viewBox="0 0 17 17"><rect x="5" y="5" width="7" height="1" fill="#000"/><rect x="7" y="7" width="3" height="2.200" fill="#000"/><path d="M4.5 9 h8 l-4 4 z" fill="#000"/></svg></div>
<div class="t r w" style="left:370px;width:300px;top:202px;">Src. Address:</div>
<div class="inp d" style="left:674px;top:201px;width:125px;height:17px"></div>
<svg style="left:804.2px;top:207px" width="10" height="6" viewBox="0 0 10 6"><path d="M0 0h10l-5 5.5z" fill="#000"/></svg>
<div class="t r w" style="left:370px;width:300px;top:225px;">Dst. Address:</div>
<div class="inp d" style="left:674px;top:224px;width:125px;height:17px"></div>
<svg style="left:804.2px;top:230px" width="10" height="6" viewBox="0 0 10 6"><path d="M0 0h10l-5 5.5z" fill="#000"/></svg>
<div class="t r w" style="left:370px;width:300px;top:256px;">Protocol:</div>
<div class="inp" style="left:674px;top:258px;width:12px;height:12px"></div>
<div class="inp" style="left:693px;top:255px;width:88px;height:17px"></div>
<div class="t " style="left:696px;top:256px;">6 (tcp)</div>
<div class="tb" style="left:782px;top:255px;width:17px;height:17px"><svg style="left:-1px;top:-1px" width="17" height="17" viewBox="0 0 17 17"><rect x="5" y="5" width="7" height="1" fill="#000"/><rect x="7" y="7" width="3" height="2.200" fill="#000"/><path d="M4.5 9 h8 l-4 4 z" fill="#000"/></svg></div>
<svg style="left:804.2px;top:260px" width="10" height="6" viewBox="0 0 10 6"><path d="M0 5.5h10l-5 -5.5z" fill="#000"/></svg>
<div class="t r w" style="left:370px;width:300px;top:279px;">Src. Port:</div>
<div class="inp d" style="left:674px;top:278px;width:125px;height:17px"></div>
<svg style="left:804.2px;top:284px" width="10" height="6" viewBox="0 0 10 6"><path d="M0 0h10l-5 5.5z" fill="#000"/></svg>
<div class="t r w" style="left:370px;width:300px;top:302px;">Dst. Port:</div>
<div class="inp" style="left:674px;top:304px;width:12px;height:12px"></div>
<div class="inp" style="left:693px;top:301px;width:106px;height:17px;overflow:hidden"><div class="t" style="left:2.5px;top:0px">110,143,2525,8025,2</div></div>
<svg style="left:804.2px;top:306px" width="10" height="6" viewBox="0 0 10 6"><path d="M0 5.5h10l-5 -5.5z" fill="#000"/></svg>
<div class="t r w" style="left:370px;width:300px;top:325px;">Any. Port:</div>
<div class="inp d" style="left:674px;top:324px;width:125px;height:17px"></div>
<svg style="left:804.2px;top:330px" width="10" height="6" viewBox="0 0 10 6"><path d="M0 0h10l-5 5.5z" fill="#000"/></svg>
<div class="t r w" style="left:370px;width:300px;top:348px;">In. Interface:</div>
<div class="inp d" style="left:674px;top:347px;width:125px;height:17px"></div>
<svg style="left:804.2px;top:353px" width="10" height="6" viewBox="0 0 10 6"><path d="M0 0h10l-5 5.5z" fill="#000"/></svg>
<div class="t r w" style="left:370px;width:300px;top:371px;">Out. Interface:</div>
<div class="inp d" style="left:674px;top:370px;width:125px;height:17px"></div>
<svg style="left:804.2px;top:376px" width="10" height="6" viewBox="0 0 10 6"><path d="M0 0h10l-5 5.5z" fill="#000"/></svg>
<div class="t r w" style="left:370px;width:300px;top:402px;">In. Interface List:</div>
<div class="inp d" style="left:674px;top:401px;width:125px;height:17px"></div>
<svg style="left:804.2px;top:407px" width="10" height="6" viewBox="0 0 10 6"><path d="M0 0h10l-5 5.5z" fill="#000"/></svg>
<div class="t r w" style="left:370px;width:300px;top:425px;">Out. Interface List:</div>
<div class="inp d" style="left:674px;top:424px;width:125px;height:17px"></div>
<svg style="left:804.2px;top:430px" width="10" height="6" viewBox="0 0 10 6"><path d="M0 0h10l-5 5.5z" fill="#000"/></svg>
<div class="t r w" style="left:370px;width:300px;top:456px;">Packet Mark:</div>
<div class="inp d" style="left:674px;top:455px;width:125px;height:17px"></div>
<svg style="left:804.2px;top:461px" width="10" height="6" viewBox="0 0 10 6"><path d="M0 0h10l-5 5.5z" fill="#000"/></svg>
<div class="t r w" style="left:370px;width:300px;top:479px;">Connection Mark:</div>
<div class="inp d" style="left:674px;top:478px;width:125px;height:17px"></div>
<svg style="left:804.2px;top:484px" width="10" height="6" viewBox="0 0 10 6"><path d="M0 0h10l-5 5.5z" fill="#000"/></svg>
<div class="t r w" style="left:370px;width:300px;top:502px;">Routing Mark:</div>
<div class="inp d" style="left:674px;top:501px;width:125px;height:17px"></div>
<svg style="left:804.2px;top:507px" width="10" height="6" viewBox="0 0 10 6"><path d="M0 0h10l-5 5.5z" fill="#000"/></svg>
<div class="t r w" style="left:370px;width:300px;top:525px;">Routing Table:</div>
<div class="inp d" style="left:674px;top:524px;width:125px;height:17px"></div>
<svg style="left:804.2px;top:530px" width="10" height="6" viewBox="0 0 10 6"><path d="M0 0h10l-5 5.5z" fill="#000"/></svg>
<div class="t r w" style="left:370px;width:300px;top:556px;">Connection Type:</div>
<div class="inp d" style="left:674px;top:555px;width:125px;height:17px"></div>
<svg style="left:804.2px;top:561px" width="10" height="6" viewBox="0 0 10 6"><path d="M0 0h10l-5 5.5z" fill="#000"/></svg>
<div class="t r w" style="left:370px;width:300px;top:579px;">Connection State:</div>
<div class="inp d" style="left:674px;top:578px;width:125px;height:17px"></div>
<svg style="left:804.2px;top:584px" width="10" height="6" viewBox="0 0 10 6"><path d="M0 0h10l-5 5.5z" fill="#000"/></svg>
<div class="b " style="left:560px;top:248px;width:257px;height:1px;background:#b4b4b4"></div>
<div class="b " style="left:560px;top:249px;width:257px;height:1px;background:#fafafa"></div>
<div class="b " style="left:560px;top:394px;width:257px;height:1px;background:#b4b4b4"></div>
<div class="b " style="left:560px;top:395px;width:257px;height:1px;background:#fafafa"></div>
<div class="b " style="left:560px;top:448px;width:257px;height:1px;background:#b4b4b4"></div>
<div class="b " style="left:560px;top:449px;width:257px;height:1px;background:#fafafa"></div>
<div class="b " style="left:560px;top:548px;width:257px;height:1px;background:#b4b4b4"></div>
<div class="b " style="left:560px;top:549px;width:257px;height:1px;background:#fafafa"></div>
<div class="b " style="left:822px;top:177px;width:16px;height:432px;background:#f4f4f4;border:1px solid #a8a8a8;"></div>
<div class="tb" style="left:822px;top:177px;width:16px;height:16px"><svg style="left:-1px;top:-1px" width="16" height="16" viewBox="0 0 16 16"><path d="M3.5 9 h9 l-4.5 -4.5z" fill="#000"/><rect x="6.5" y="9" width="3" height="2.5" fill="#000"/></svg></div>
<div class="b " style="left:822px;top:572px;width:16px;height:22px;background:#dcdcdc;border:1px solid #a8a8a8;"></div>
<div class="tb" style="left:822px;top:594px;width:16px;height:15px"><svg style="left:-1px;top:-1px" width="16" height="15" viewBox="0 0 16 15"><path d="M3.5 7 h9 l-4.5 4.5z" fill="#000"/><rect x="6.5" y="4.5" width="3" height="2.5" fill="#000"/></svg></div>
<div class="btn" style="left:855px;top:149px;width:104px;height:23px;border:1px solid #000;box-shadow:inset 0 0 0 1px rgba(0,0,0,.3), inset 2px 2px 0 #fff;"></div>
<div class="t c " style="left:756.5px;width:300px;top:152.5px;">OK</div>
<div class="btn" style="left:855px;top:175px;width:104px;height:23px;"></div>
<div class="t c " style="left:756.5px;width:300px;top:178.5px;">Cancel</div>
<div class="btn" style="left:855px;top:201px;width:104px;height:23px;"></div>
<div class="t c " style="left:756.5px;width:300px;top:204.5px;">Apply</div>
<div class="btn" style="left:855px;top:232px;width:104px;height:23px;"></div>
<div class="t c " style="left:756.5px;width:300px;top:235.5px;">Disable</div>
<div class="btn" style="left:855px;top:258px;width:104px;height:23px;"></div>
<div class="t c " style="left:756.5px;width:300px;top:261.5px;">Comment</div>
<div class="btn" style="left:855px;top:284px;width:104px;height:23px;"></div>
<div class="t c " style="left:756.5px;width:300px;top:287.5px;">Copy</div>
<div class="btn" style="left:855px;top:310px;width:104px;height:23px;"></div>
<div class="t c " style="left:756.5px;width:300px;top:313.5px;">Remove</div>
<div class="btn" style="left:855px;top:336px;width:104px;height:23px;"></div>
<div class="t c " style="left:756.5px;width:300px;top:339.5px;">Reset Counters</div>
<div class="btn" style="left:855px;top:362px;width:104px;height:23px;"></div>
<div class="t c " style="left:756.5px;width:300px;top:365.5px;">Reset All Counters</div>
<div class="b " style="left:552px;top:618px;width:203px;height:19px;border-top:1px solid #a0a0a0;border-left:1px solid #a0a0a0;border-bottom:1px solid #fff;border-right:1px solid #fff;"></div>
<div class="b " style="left:757px;top:618px;width:207px;height:19px;border-top:1px solid #a0a0a0;border-left:1px solid #a0a0a0;border-bottom:1px solid #fff;border-right:1px solid #fff;"></div>
<div class="t " style="left:555px;top:620px;">enabled</div>
<div class="badge" style="left:79px;top:179.9px">1</div>
<div class="badge" style="left:189.9px;top:273px">2</div>
<div class="badge" style="left:401.7px;top:68.7px">3</div>
<div class="badge" style="left:602.8px;top:169.7px">4</div>
<div class="badge" style="left:591.7px;top:250.8px">5</div>
<div class="badge" style="left:594.8px;top:299.5px">6</div>
</body></html>
